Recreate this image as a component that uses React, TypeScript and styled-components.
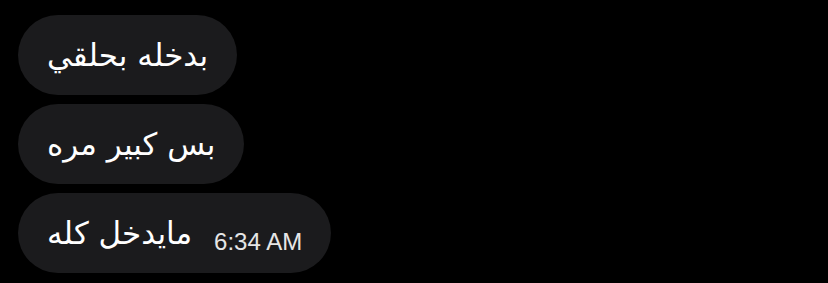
import React from "react";
import styled, { createGlobalStyle } from "styled-components";

const GlobalStyle = createGlobalStyle`
	html, body {
		margin: 0;
		padding: 0;
		background: #000;
	}
	body {
		width: 828px;
		height: 283px;
		overflow: hidden;
		font-family: "DejaVu Sans", "Noto Sans", sans-serif;
	}
`;

const Thread = styled.div`
	display: flex;
	flex-direction: column;
	align-items: flex-start;
	gap: 9px;
	padding: 15px 0 0 18px;
`;

const Bubble = styled.div`
	height: 80px;
	box-sizing: border-box;
	padding: 0 29px;
	border-radius: 40px;
	background: #1b1b1d;
	display: flex;
	align-items: center;
	gap: 22px;
`;

const MessageText = styled.span`
	direction: rtl;
	color: #fff;
	font-size: 31px;
	line-height: 1;
`;

const Time = styled.span`
	color: #e6e6e6;
	font-family: "Liberation Sans", Arial, sans-serif;
	font-size: 24px;
	margin-top: 18px;
`;

const messages = [
	{ text: "بدخله بحلقي" },
	{ text: "بس كبير مره" },
	{ text: "مايدخل كله", time: "6:34 AM" },
];

const App: React.FC = () => (
	<>
		<GlobalStyle />
		<Thread>
			{messages.map((m, i) => (
				<Bubble key={i}>
					<MessageText>{m.text}</MessageText>
					{m.time && <Time>{m.time}</Time>}
				</Bubble>
			))}
		</Thread>
	</>
);

export default App;
